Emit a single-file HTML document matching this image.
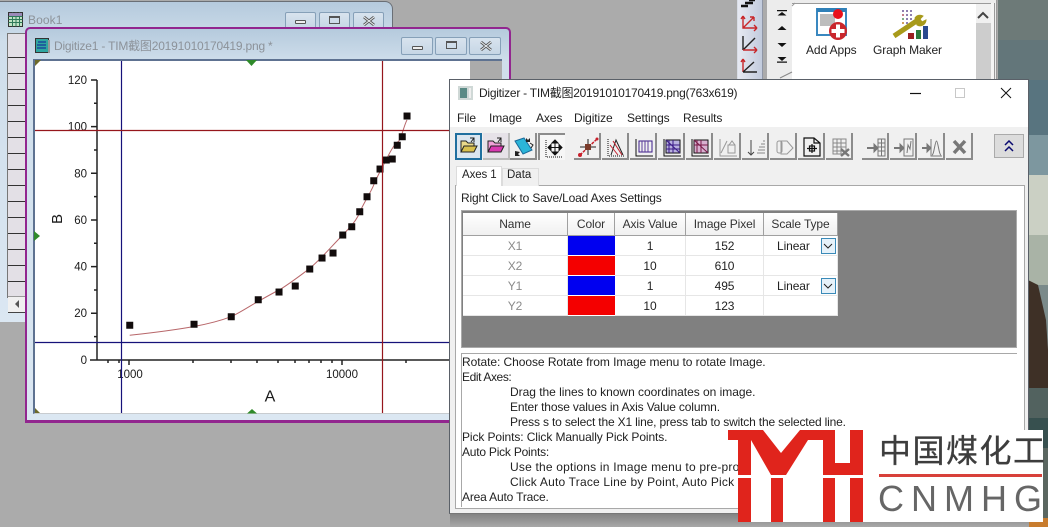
<!DOCTYPE html>
<html><head><meta charset="utf-8">
<style>
html,body{margin:0;padding:0;width:1048px;height:527px;overflow:hidden;background:#ababab}
body{position:relative;font-family:"Liberation Sans","Noto Sans CJK SC",sans-serif;font-size:12px;color:#222}
.a{position:absolute;box-sizing:border-box}
.t{position:absolute;white-space:nowrap;line-height:15px;font-size:12px;letter-spacing:-.1px}
.wb{position:absolute;box-sizing:border-box;border:1px solid #86a0b8;border-radius:2px;background:linear-gradient(#d8e3ee,#c6d6e5)}
.c{position:absolute;text-align:center;line-height:20px;font-size:12px;letter-spacing:-.1px;box-sizing:border-box;border-right:1px solid #e6e6e6;border-bottom:1px solid #e6e6e6;height:20px;background:#fff}
.h{position:absolute;text-align:center;line-height:22px;font-size:12px;letter-spacing:-.1px;box-sizing:border-box;border-right:1px solid #a0a0a0;border-bottom:1px solid #a0a0a0;height:23px;background:linear-gradient(#fff,#f0f0f0);color:#333}
.g{color:#8a8a8a}
.b{position:absolute;top:133px;width:27px;height:27px;background:#f0f0f0;border-right:2px solid #8c8c8c;border-bottom:2px solid #8c8c8c;box-sizing:border-box}
.b svg{position:absolute;left:2px;top:2px}
</style></head><body>

<!-- desktop wallpaper on right -->
<svg class="a" style="left:998px;top:0" width="50" height="527">
<rect width="50" height="527" fill="#7a8a8a"/>
<rect x="0" y="0" width="50" height="40" fill="#6d7a78"/>
<rect x="0" y="40" width="50" height="40" fill="#63767a"/>
<rect x="0" y="80" width="50" height="55" fill="#58747f"/>
<rect x="0" y="135" width="50" height="40" fill="#7d979f"/>
<rect x="0" y="175" width="50" height="60" fill="#cbd0c4"/>
<rect x="0" y="235" width="50" height="50" fill="#a9b3a6"/>
<path d="M30 280 L40 285 L48 320 L50 350 L50 388 L30 388Z" fill="#3e3026"/>
<rect x="30" y="388" width="20" height="30" fill="#52625f"/>
<rect x="30" y="418" width="20" height="30" fill="#37504f"/>
<rect x="30" y="448" width="20" height="70" fill="#5a6660"/>
<rect x="0" y="518" width="50" height="9" fill="#c87c2e"/>
</svg>

<!-- top right app panel -->
<div class="a" style="left:736px;top:0;width:262px;height:80px;background:#ababab"></div>
<div class="a" style="left:737px;top:0;width:26px;height:80px;background:linear-gradient(90deg,#e6e9f2,#c2cbdd);border-left:1px solid #d8dde6;border-right:1px solid #8f96a6"></div>
<svg class="a" style="left:738px;top:0" width="26" height="80" fill="none">
<path d="M3 6h7M7 3h8M11 0h6" stroke="#111" stroke-width="2.400"/>
<path d="M5 16v12h14M5 28l11-11M16 17h-4M16 17v4M19 28l-3-3M19 28l-3 3M5 16l-2 3M5 16l2 3" stroke="#c8262a" stroke-width="1.400"/>
<path d="M5 36v14" stroke="#222" stroke-width="1.400"/><path d="M5 50l12-12" stroke="#222" stroke-width="1.400"/>
<path d="M5 50h14M19 50l-3-3M19 50l-3 3" stroke="#c8262a" stroke-width="1.400"/>
<path d="M5 59v13M5 59l-2 3M5 59l2 3" stroke="#c8262a" stroke-width="1.400"/>
<path d="M5 72h14M5 72l11-10" stroke="#222" stroke-width="1.400"/>
</svg>
<div class="a" style="left:767px;top:0;width:230px;height:80px;background:#ececec;border-right:1px solid #999"></div>
<div class="a" style="left:792px;top:3px;width:184px;height:77px;background:#fff;border-top:1px solid #9a9a9a"></div>
<div class="a" style="left:976px;top:3px;width:15px;height:77px;background:#cdcdcd;border-top:1px solid #9a9a9a"></div>
<div class="a" style="left:976px;top:4px;width:15px;height:19px;background:#f0f0f0"></div>
<div class="a" style="left:991px;top:3px;width:4px;height:77px;background:#f4f4f4;border-right:1px solid #999"></div>
<svg class="a" style="left:770px;top:0" width="225" height="80" fill="#111">
<path d="M7 10h10v1.200H7zM12 12l-4.500 3.500h9z"/>
<path d="M12 26l-4.500 4h9z"/>
<path d="M7.500 43h9l-4.500 4z"/>
<path d="M7.500 57h9l-4.500 4zM7 61.500h10v1.200H7z"/>
<path d="M10 78 L22 72" stroke="#888" stroke-width="1" fill="none"/>
<path d="M22 6 L25 3" stroke="#999" fill="none"/>
<path d="M208 18l5-5 5 5" fill="none" stroke="#444" stroke-width="2"/>
<!-- Add Apps -->
<rect x="47" y="9" width="29" height="26" fill="#fff" stroke="#3a88c0" stroke-width="2"/>
<rect x="47" y="8" width="29" height="4" fill="#2f80b8"/>
<rect x="50" y="14" width="15" height="12" fill="#bdbdbd"/>
<circle cx="68" cy="14" r="5" fill="#e8101a"/>
<circle cx="68" cy="31" r="9" fill="#c9262c"/>
<path d="M66 24.500h4v4.500h4.500v4h-4.500v4.500h-4V33h-4.500v-4h4.500z" fill="#fff"/>
<!-- Graph Maker -->
<g fill="#8f7fb0"><rect x="132" y="10" width="2" height="2"/><rect x="136" y="10" width="2" height="2"/><rect x="140" y="10" width="2" height="2"/><rect x="132" y="14" width="2" height="2" fill="#c47f8a"/><rect x="136" y="14" width="2" height="2"/><rect x="140" y="14" width="2" height="2"/><rect x="132" y="18" width="2" height="2" fill="#7fae8a"/><rect x="136" y="18" width="2" height="2"/><rect x="140" y="18" width="2" height="2"/><rect x="132" y="22" width="2" height="2" fill="#d0a060"/><rect x="136" y="22" width="2" height="2"/></g>
<path d="M124 36 L148 20" stroke="#a89a1a" stroke-width="5"/>
<path d="M145 18a6 6 0 0 1 8-2l-3 3 2 3 4-2a6 6 0 0 1-9 5z" fill="#a89a1a" stroke="#a89a1a"/>
<rect x="138" y="33" width="6" height="6" fill="#9a2020"/>
<rect x="146" y="30" width="5" height="9" fill="#2a7a3a"/>
<rect x="153" y="26" width="5" height="13" fill="#2a4a90"/>
</svg>
<div class="t" style="left:806px;top:43px;color:#222">Add Apps</div>
<div class="t" style="left:873px;top:43px;color:#222">Graph Maker</div>

<!-- bottom bits under dialog -->
<div class="a" style="left:737px;top:514px;width:26px;height:13px;background:#c8d0e0"></div>
<div class="a" style="left:767px;top:514px;width:229px;height:13px;background:#ececec;border-right:1px solid #999"></div>
<div class="a" style="left:792px;top:514px;width:184px;height:13px;background:#fff;border-left:1px solid #999"></div>

<!-- Book1 window -->
<div class="a" style="left:0;top:1px;width:393px;height:321px;background:linear-gradient(#b5cadd 0,#cfdeeb 40px,#dbe7f2 100%);border:1px solid #6a6f76;border-left:0;border-bottom:0;border-radius:0 8px 0 0"></div>
<svg class="a" style="left:8px;top:12px" width="15" height="15"><rect x=".5" y=".5" width="14" height="14" fill="#bfe3c4" stroke="#333"/><path d="M.5 4.500h14M.5 7.500h14M.5 10.500h14M4.500 .5v14M8 .5v14M11.500 .5v14" stroke="#2e7a5a"/><rect x="1" y="1" width="13" height="3" fill="#9a8ab8"/></svg>
<div class="t" style="left:28px;top:13px;color:#8c9299;letter-spacing:.1px">Book1</div>
<div class="wb" style="left:285px;top:12px;width:31px;height:17px"><div class="a" style="left:9px;top:7px;width:11px;height:4px;border:1px solid #555;background:#eee;border-radius:1px"></div></div>
<div class="wb" style="left:319px;top:12px;width:31px;height:17px"><div class="a" style="left:9px;top:3px;width:11px;height:8px;border:1px solid #555;border-top-width:2px"></div></div>
<div class="wb" style="left:353px;top:12px;width:31px;height:17px"><svg class="a" style="left:9px;top:3px" width="12" height="10"><path d="M1 1l10 8M11 1L1 9" stroke="#555" stroke-width="2.800"/><path d="M1 1l10 8M11 1L1 9" stroke="#eef2f6" stroke-width="1"/></svg></div>
<div class="a" style="left:7px;top:33px;width:18px;height:265px;background:#e3e0e6;border:1px solid #777;border-right:0"></div>
<svg class="a" style="left:8px;top:33px" width="17" height="265"><path d="M0 24.500h17M0 40.500h17M0 56.500h17M0 72.500h17M0 88.500h17M0 104.500h17M0 120.500h17M0 136.500h17M0 152.500h17M0 168.500h17M0 184.500h17M0 200.500h17M0 216.500h17M0 232.500h17M0 248.500h17" stroke="#333"/></svg>
<div class="a" style="left:8px;top:296px;width:17px;height:17px;background:#f0f0f0;border-bottom:1px solid #444;border-top:1px solid #999"></div>
<svg class="a" style="left:13px;top:299px" width="8" height="10"><path d="M6 1L2 5l4 4z" fill="#555"/></svg>

<!-- Digitize1 window -->
<div class="a" style="left:25px;top:27px;width:486px;height:396px;background:linear-gradient(#b5cadd 0,#cfdeeb 33px,#dbe7f2 100%);border:2px solid #92268f;border-bottom-width:3px;border-radius:5px 5px 0 0"></div>
<div class="a" style="left:33px;top:59px;width:469px;height:355px;background:#ababab;border:2px solid #5e7291;border-right:0;border-bottom:1px solid #c8ccd0"></div>
<div class="a" style="left:35px;top:61px;width:435px;height:352px;background:#fff"></div>
<svg class="a" style="left:35px;top:38px" width="15" height="15"><rect x=".5" y=".5" width="13" height="14" fill="#2fa6a0" stroke="#333"/><path d="M3 4h8M2 7h9M2 10h9" stroke="#1a4a9a" stroke-width="1.500"/><rect x="13" y="2" width="2" height="13" fill="#999"/></svg>
<div class="t" style="left:54px;top:39px;color:#8c9299;letter-spacing:-.2px">Digitize1 - TIM截图20191010170419.png *</div>
<div class="wb" style="left:401px;top:37px;width:32px;height:18px"><div class="a" style="left:10px;top:8px;width:11px;height:4px;border:1px solid #555;background:#eee;border-radius:1px"></div></div>
<div class="wb" style="left:435px;top:37px;width:32px;height:18px"><div class="a" style="left:10px;top:3px;width:11px;height:8px;border:1px solid #555;border-top-width:2px"></div></div>
<div class="wb" style="left:469px;top:37px;width:32px;height:18px"><svg class="a" style="left:10px;top:3px" width="12" height="10"><path d="M1 1l10 8M11 1L1 9" stroke="#555" stroke-width="2.800"/><path d="M1 1l10 8M11 1L1 9" stroke="#eef2f6" stroke-width="1"/></svg></div>

<!-- plot -->
<svg class="a" style="left:0;top:0" width="452" height="420" font-family="Liberation Sans" fill="#1a1a1a">
<g stroke="#222" stroke-width="1.500" fill="none">
<path d="M97 80V360M90 360H450"/>
<path d="M91 80h6M91 126.600h6M91 173.300h6M91 220h6M91 266.600h6M91 313.300h6"/>
<path d="M94 103.300h3M94 150h3M94 196.600h3M94 243.300h3M94 290h3M94 336.600h3"/>
<path d="M129 360v5M342 360v5M193 360v3M231 360v3M257 360v3M278 360v3M295 360v3M309 360v3M321 360v3M332 360v3M406 360v3M108 360v3M119 360v3"/>
</g>
<g font-size="11.500" text-anchor="end">
<text x="87" y="84">120</text><text x="87" y="130.500">100</text><text x="87" y="177.500">80</text><text x="87" y="224">60</text><text x="87" y="270.500">40</text><text x="87" y="317">20</text><text x="87" y="364">0</text>
</g>
<g font-size="11.500" text-anchor="middle"><text x="130" y="378">1000</text><text x="342" y="378">10000</text></g>
<text x="270" y="401.500" font-size="16" text-anchor="middle">A</text>
<text font-size="15" text-anchor="middle" transform="translate(62 219) rotate(-90)">B</text>
<path d="M129.700 335.300 C155 332.500 175 330 194 326.500 S225 319 231 316.700 S250 306 258 301.500 S275 292 279 290 S300 276 309.700 268.300 S330 248 342.700 235 S358 217 360 211.700 S372 190 373.700 185 S382 168 386 160 S395 143 398 141.700 S404 125 407 120" fill="none" stroke="#b8676a" stroke-width="1"/>
<g fill="#120c0c" stroke="#120c0c" stroke-width=".5">
<rect x="126.500" y="322" width="6.500" height="6.500"/><rect x="190.800" y="321" width="6.500" height="6.500"/><rect x="228" y="313.500" width="6.500" height="6.500"/><rect x="255" y="296.500" width="6.500" height="6.500"/><rect x="275.800" y="288.800" width="6.500" height="6.500"/><rect x="292" y="282.800" width="6.500" height="6.500"/><rect x="306.500" y="265.800" width="6.500" height="6.500"/><rect x="318.800" y="254.800" width="6.500" height="6.500"/><rect x="329.800" y="249.800" width="6.500" height="6.500"/><rect x="339.500" y="231.800" width="6.500" height="6.500"/><rect x="348.500" y="223.500" width="6.500" height="6.500"/><rect x="356.500" y="208.500" width="6.500" height="6.500"/><rect x="363.800" y="193.500" width="6.500" height="6.500"/><rect x="370.500" y="177.500" width="6.500" height="6.500"/><rect x="376.800" y="165.800" width="6.500" height="6.500"/><rect x="383" y="156.800" width="6.500" height="6.500"/><rect x="389" y="155.800" width="6.500" height="6.500"/><rect x="394" y="142" width="6.500" height="6.500"/><rect x="399" y="133.500" width="6.500" height="6.500"/><rect x="403.800" y="112.800" width="6.500" height="6.500"/>
</g>
<path d="M121.500 61V413M35 342.500H450" stroke="#16127a" stroke-width="1.200" fill="none"/>
<path d="M382.500 61V413M35 130.500H450" stroke="#96161c" stroke-width="1.200" fill="none"/>
<g fill="#2f8a2a"><path d="M246 60h11l-5.500 6z"/><path d="M247 413.500h10l-5-4.500z"/><path d="M34 231l6 5-6 5z"/></g>
<g fill="#6d6a2a"><path d="M35 60h6l-6 6z"/><path d="M35 413h5l-5-5z"/></g>
<path d="M465 60h10l-5 6z" fill="#5a7a2a"/>
</svg>

<!-- Digitizer dialog -->
<div class="a" style="left:450px;top:510px;width:579px;height:17px;background:linear-gradient(#777,#a8a8a8)"></div>
<div class="a" style="left:449px;top:79px;width:580px;height:435px;background:#f0f0f0;border:1px solid #5a6068;border-bottom-color:#777"></div>
<div class="a" style="left:450px;top:80px;width:578px;height:47px;background:#fff"></div>
<svg class="a" style="left:458px;top:86px" width="15" height="14"><rect x="0" y="0" width="15" height="14" fill="#cfd8d6"/><rect x="2" y="2" width="7" height="10" fill="#5a8a85"/><rect x="11" y="2" width="2" height="10" fill="#eee"/></svg>
<div class="t" style="left:479px;top:86px;letter-spacing:-.25px;color:#222">Digitizer - TIM截图20191010170419.png(763x619)</div>
<svg class="a" style="left:900px;top:85px" width="120" height="16" fill="none"><path d="M10 8.500h11" stroke="#111" stroke-width="1.200"/><rect x="55.500" y="3.500" width="9" height="9" stroke="#c8c8c8"/><path d="M101 3l10 10M111 3l-10 10" stroke="#111"/></svg>

<div class="t" style="left:457px;top:111px">File</div>
<div class="t" style="left:489px;top:111px">Image</div>
<div class="t" style="left:536px;top:111px">Axes</div>
<div class="t" style="left:574px;top:111px">Digitize</div>
<div class="t" style="left:627px;top:111px">Settings</div>
<div class="t" style="left:683px;top:111px">Results</div>

<!-- toolbar -->
<div class="b" style="left:455px;width:27px;background:#dbe6f0;border:2px solid #1f6f9f"><svg style="left:2px;top:1px" width="20" height="20"><path d="M2 16V5h5l2 2h6v3" fill="#ead98a" stroke="#222"/><path d="M2 16l3-6h13l-3 6z" fill="#d8c04e" stroke="#222"/><path d="M11 2l4 0 0 4M15 2l-3 4" stroke="#222" fill="none"/></svg></div>
<div class="b" style="left:483px;background:#e6e2e8;border-color:#bbb"><svg width="22" height="22"><path d="M3 17V6h5l2 2h6v3" fill="#f0a0d8" stroke="#222"/><path d="M3 17l3-6h13l-3 6z" fill="#d838b0" stroke="#222"/><path d="M12 3h4v4M16 3l-3 4" stroke="#222" fill="none"/></svg></div>
<div class="b" style="left:510px;"><svg width="24" height="24"><path d="M3 6l9-3 8 12-9 4z" fill="#2bb5d8" stroke="#1a6a9a"/><path d="M14 3l2 2 2-2v4h-4zM3 16v5h5l-2-2 2-2z" fill="#222"/><path d="M18 8l3 2-2 3" stroke="#222" fill="none"/></svg></div>
<div class="b" style="left:538px;background:#f6f6f6;border:0;border-left:2px solid #8c8c8c;border-top:2px solid #8c8c8c"><svg width="24" height="24" fill="none" stroke="#111"><path d="M4 3v17h17" stroke-dasharray="1 1"/><path d="M13 4v13M7 10.500h12"/><path d="M13 3l-3 3h6zM13 18l-3-3h6zM6 10.500l3-3v6zM20 10.500l-3-3v6z" fill="#111"/></svg></div>

<div class="b" style="left:574px"><svg width="24" height="24" fill="none"><path d="M4 20L21 4" stroke="#c8202c" stroke-width="1.500" stroke-dasharray="3 1"/><path d="M4 12h16M12 4v16" stroke="#222"/><rect x="9" y="9" width="6" height="6" fill="#7a3a2a"/><circle cx="4" cy="20" r="2" fill="#c8202c"/><circle cx="21" cy="4" r="1.500" fill="#c8202c"/></svg></div>
<div class="b" style="left:602px"><svg width="24" height="24" fill="none"><path d="M4 4v17h17" stroke="#111" stroke-dasharray="1 1"/><path d="M7 20L12 5l7 15" stroke="#222"/><path d="M9 6l9 14M6 10l8 10" stroke="#c2202c"/></svg></div>
<div class="b" style="left:630px"><svg width="24" height="24" fill="none"><path d="M4 4v17h17" stroke="#111"/><rect x="7" y="6" width="13" height="11" stroke="#3a1a88"/><path d="M10 6v11M13 6v11M16 6v11" stroke="#5a3a9a"/></svg></div>
<div class="b" style="left:658px"><svg width="24" height="24" fill="none"><path d="M4 4v17h17" stroke="#111"/><rect x="6" y="5" width="14" height="13" stroke="#111" fill="#b8b0e0"/><path d="M6 5l14 13M9 5v13M13 5v13M6 10h14M6 14h14" stroke="#3a1a88"/></svg></div>
<div class="b" style="left:686px"><svg width="24" height="24" fill="none"><path d="M4 4v17h17" stroke="#111"/><rect x="6" y="5" width="14" height="13" stroke="#111" fill="#d8b0d0"/><path d="M6 5l14 13M9 5v13M13 5v13M6 10h14" stroke="#7a1a48"/></svg></div>
<div class="b" style="left:714px"><svg width="24" height="24" fill="none" stroke="#999"><path d="M4 4v17h17M5 18l6-12"/><path d="M12 10h7v8h-7zM13 10l3-4 3 4"/></svg></div>
<div class="b" style="left:742px"><svg width="24" height="24" fill="none" stroke="#888"><path d="M7 5v15M4 17l3 3 3-3" stroke="#444"/><path d="M13 18h8M14 15h7M15 12h6M17 9h4M19 6h2"/></svg></div>
<div class="b" style="left:770px"><svg width="24" height="24" fill="none" stroke="#999"><path d="M9 6h6l6 7-6 6H9z"/><rect x="5" y="6" width="5" height="12" rx="2"/></svg></div>
<div class="b" style="left:798px"><svg width="24" height="24" fill="none" stroke="#111" stroke-width="1.200"><path d="M4 3h10l6 5v13H4zM14 3v5h6"/><path d="M12 9v9M7 13.500h10"/><rect x="9.500" y="11" width="5" height="5"/></svg></div>
<div class="b" style="left:826px"><svg width="24" height="24" fill="none" stroke="#888"><path d="M5 4h13v15H5zM5 8h13M5 12h13M5 16h13M9 4v15M13 4v15"/><path d="M13 14l8 7M21 14l-8 7" stroke-width="2.400" stroke="#777"/></svg></div>

<div class="b" style="left:862px"><svg width="24" height="24" fill="none" stroke="#777"><path d="M3 13h8" stroke-width="2"/><path d="M10 9l4 4-4 4z" fill="#777"/><path d="M14 4h7v17h-7zM14 8h7M14 12h7M14 16h7M17.500 4v17"/></svg></div>
<div class="b" style="left:890px"><svg width="24" height="24" fill="none" stroke="#777"><path d="M2 13h7" stroke-width="2"/><path d="M8 9l4 4-4 4z" fill="#777"/><path d="M12 4h9v17h-9zM15 18l1-8 2 4 1-8"/></svg></div>
<div class="b" style="left:918px"><svg width="24" height="24" fill="none" stroke="#777"><path d="M2 13h6" stroke-width="2"/><path d="M7 9l4 4-4 4z" fill="#777"/><path d="M11 4v17h11M12 20c2 0 3-14 4.500-14s2.500 14 4.500 14"/></svg></div>
<div class="b" style="left:946px"><svg width="24" height="24" fill="none"><path d="M6 6l11 12M17 6L6 18" stroke="#777" stroke-width="3.500"/></svg></div>
<div class="a" style="left:994px;top:134px;width:30px;height:24px;background:#dcdcdc;border:1px solid #aaa"></div>
<svg class="a" style="left:1003px;top:140px" width="12" height="12" fill="none" stroke="#0a0a70" stroke-width="1.500"><path d="M2 5l4-4 4 4M2 11l4-4 4 4"/></svg>

<!-- tabs -->
<div class="a" style="left:455px;top:185px;width:570px;height:324px;background:#fff;border:1px solid #a8a8a8"></div>
<div class="a" style="left:456px;top:166px;width:46px;height:20px;background:#fff;border:1px solid #dcdcdc;border-bottom:0"></div>
<div class="a" style="left:502px;top:168px;width:37px;height:18px;background:#f0f0f0;border:1px solid #dcdcdc;border-bottom:0"></div>
<div class="t" style="left:462px;top:168px;font-size:11.500px;letter-spacing:-.1px">Axes 1</div>
<div class="t" style="left:507px;top:168px;font-size:11.500px;letter-spacing:0">Data</div>
<div class="t" style="left:461px;top:191px;letter-spacing:-.18px">Right Click to Save/Load Axes Settings</div>

<!-- grid -->
<div class="a" style="left:461px;top:210px;width:556px;height:138px;background:#808080;border:1px solid #aaa"></div>
<div class="h" style="left:463px;top:213px;width:105px">Name</div>
<div class="h" style="left:568px;top:213px;width:47px">Color</div>
<div class="h" style="left:615px;top:213px;width:71px">Axis Value</div>
<div class="h" style="left:686px;top:213px;width:78px">Image Pixel</div>
<div class="h" style="left:764px;top:213px;width:74px">Scale Type</div>

<div class="c g" style="left:463px;top:236px;width:105px">X1</div><div class="c" style="left:568px;top:236px;width:47px;background:#0000f0;border:0;border-bottom:1px solid #fff"></div><div class="c" style="left:615px;top:236px;width:71px">1</div><div class="c" style="left:686px;top:236px;width:78px">152</div><div class="c" style="left:764px;top:236px;width:74px;text-align:left;padding-left:13px">Linear</div>
<div class="c g" style="left:463px;top:256px;width:105px">X2</div><div class="c" style="left:568px;top:256px;width:47px;background:#f40000;border:0;border-bottom:1px solid #fff"></div><div class="c" style="left:615px;top:256px;width:71px">10</div><div class="c" style="left:686px;top:256px;width:78px">610</div><div class="c" style="left:764px;top:256px;width:74px"></div>
<div class="c g" style="left:463px;top:276px;width:105px">Y1</div><div class="c" style="left:568px;top:276px;width:47px;background:#0000f0;border:0;border-bottom:1px solid #fff"></div><div class="c" style="left:615px;top:276px;width:71px">1</div><div class="c" style="left:686px;top:276px;width:78px">495</div><div class="c" style="left:764px;top:276px;width:74px;text-align:left;padding-left:13px">Linear</div>
<div class="c g" style="left:463px;top:296px;width:105px">Y2</div><div class="c" style="left:568px;top:296px;width:47px;background:#f40000;border:0;border-bottom:1px solid #fff"></div><div class="c" style="left:615px;top:296px;width:71px">10</div><div class="c" style="left:686px;top:296px;width:78px">123</div><div class="c" style="left:764px;top:296px;width:74px"></div>
<div class="a" style="left:821px;top:238px;width:15px;height:16px;background:#e6f2fa;border:1px solid #3a8ab8"></div>
<svg class="a" style="left:823px;top:243px" width="10" height="7" fill="none" stroke="#222"><path d="M1 1l4 4 4-4"/></svg>
<div class="a" style="left:821px;top:278px;width:15px;height:16px;background:#e6f2fa;border:1px solid #3a8ab8"></div>
<svg class="a" style="left:823px;top:283px" width="10" height="7" fill="none" stroke="#222"><path d="M1 1l4 4 4-4"/></svg>

<!-- help text -->
<div class="a" style="left:461px;top:353px;width:556px;height:1px;background:#a8a8a8"></div>
<div class="a" style="left:461px;top:353px;width:1px;height:154px;background:#a8a8a8"></div>
<div class="t" style="left:462px;top:355px;letter-spacing:-.06px">Rotate: Choose Rotate from Image menu to rotate Image.</div>
<div class="t" style="left:462px;top:370px;letter-spacing:-.4px">Edit Axes:</div>
<div class="t" style="left:510px;top:385px;letter-spacing:-.03px">Drag the lines to known coordinates on image.</div>
<div class="t" style="left:510px;top:400px;letter-spacing:-.15px">Enter those values in Axis Value column.</div>
<div class="t" style="left:510px;top:415px;letter-spacing:-.17px">Press s to select the X1 line, press tab to switch the selected line.</div>
<div class="t" style="left:462px;top:430px">Pick Points: Click Manually Pick Points.</div>
<div class="t" style="left:462px;top:445px;letter-spacing:-.22px">Auto Pick Points:</div>
<div class="t" style="left:510px;top:460px;letter-spacing:.2px">Use the options in Image menu to pre-process the image.</div>
<div class="t" style="left:510px;top:475px;letter-spacing:.2px">Click Auto Trace Line by Point, Auto Pick Points.</div>
<div class="t" style="left:462px;top:490px;letter-spacing:-.17px">Area Auto Trace.</div>

<!-- logo -->
<div class="a" style="left:738px;top:430px;width:305px;height:92px;background:#fff"></div>
<svg class="a" style="left:728px;top:430px" width="136" height="92" fill="#e0241c">
<path d="M0 0H35L53 23L72 0H107V33H122V0H135V45H95V10H80L58 45H43L23 10V45H10V10H0Z"/>
<rect x="10" y="48" width="13" height="44"/>
<rect x="43" y="48" width="12" height="44"/>
<rect x="95" y="48" width="12" height="44"/>
<rect x="122" y="48" width="13" height="44"/>
</svg>
<div class="t" style="left:879px;top:431px;font-size:32px;line-height:40px;letter-spacing:1.500px;color:#3d3d3d;-webkit-text-stroke:.3px #3d3d3d;font-family:'Liberation Sans','Noto Sans CJK SC',sans-serif">中国煤化工</div>
<div class="a" style="left:879px;top:474px;width:163px;height:3px;background:#d8403a"></div>
<div class="t" style="left:878px;top:480px;font-size:36px;line-height:38px;letter-spacing:7px;color:#666">CNMHG</div>
</body></html>
